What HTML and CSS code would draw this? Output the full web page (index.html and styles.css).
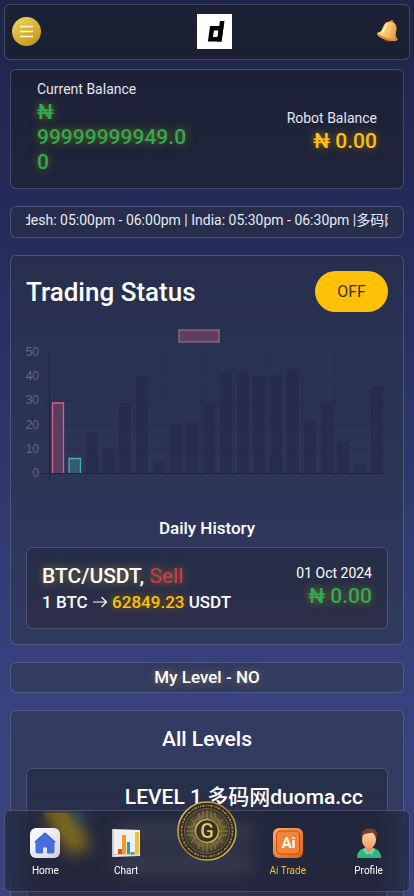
FILE: index.html
```html
<!DOCTYPE html>
<html lang="en">
<head>
<meta charset="utf-8">
<meta name="viewport" content="width=device-width, initial-scale=1">
<title>Trading Dashboard</title>
<link rel="stylesheet" href="styles.css">
</head>
<body>
<header class="topbar glass">
  <button class="menu-btn" type="button" aria-label="Menu">
    <svg viewBox="0 0 29 29"><path d="M8 9.500h13M8 14.500h13M8 19.500h13" stroke="#fff9d8" stroke-width="1.500"/></svg>
  </button>
  <a class="logo" href="#" aria-label="Home page">
    <svg viewBox="0 0 35 35"><g transform="translate(3 0) skewX(-8)" fill="none" stroke="#000" stroke-width="4.500"><rect x="14" y="14.200" width="9" height="11"/><path d="M23.200 7v20.400"/></g></svg>
  </a>
  <button class="bell-btn" type="button" aria-label="Notifications">
    <svg viewBox="0 0 24 26">
      <defs><linearGradient id="bell" x1="0" y1="0" x2="1" y2="0"><stop offset="0" stop-color="#ffdf8c"/><stop offset=".5" stop-color="#fbc162"/><stop offset="1" stop-color="#d98834"/></linearGradient></defs>
      <g transform="rotate(17 12 13)">
        <circle cx="12" cy="3.400" r="1.800" fill="#b3792d"/>
        <ellipse cx="13" cy="21" rx="4" ry="2.600" fill="#a2391c"/>
        <path d="M12 3.400c-4.600 0-6.600 3.200-6.900 7.400-.3 4.200-1 5.700-3.600 7.300C1 20.600 5 22 12 22s11-1.400 10.500-3.900c-2.600-1.600-3.300-3.100-3.600-7.300C18.600 6.600 16.600 3.400 12 3.400z" fill="url(#bell)"/>
        <path d="M1.500 18.200c3 2.200 18 2.200 21 0 .4 2.500-4 3.900-10.500 3.900S1.100 20.700 1.500 18.200z" fill="#e08b36"/>
        <path d="M8.200 7.500c-1.300 2.500-.7 6-2 8.500" stroke="#fff0b5" stroke-width="1.600" fill="none" stroke-linecap="round"/>
      </g>
    </svg>
  </button>
</header>

<main class="page">
  <section class="card balances">
    <div class="balance current">
      <span class="label">Current Balance</span>
      <strong class="amount green">₦ 99999999949.00</strong>
    </div>
    <div class="balance right">
      <span class="label">Robot Balance</span>
      <strong class="amount gold">₦ 0.00</strong>
    </div>
  </section>

  <section class="card ticker">
    <div class="ticker-view"><span class="ticker-text">Bangladesh: 05:00pm - 06:00pm | India: 05:30pm - 06:30pm |多码网</span></div>
  </section>

  <section class="card status">
    <div class="status-head">
      <h1>Trading Status</h1>
      <button class="toggle" type="button">OFF</button>
    </div>
    <svg class="chart" viewBox="0 0 362 188" role="img" aria-label="Trading activity">
      <rect x="153" y="8" width="40" height="12" fill="#ff6384" fill-opacity=".25" stroke="#d0a0c0" stroke-opacity=".35" stroke-width="2"/>
      <g stroke="#1a2038" stroke-opacity=".22">
        <path d="M18 54.500H358M18 78.500H358M18 102.500H358M18 126.500H358"/>
        <path d="M91.500 30V151M141.500 30V151M174.500 30V151M208.500 30V151M241.500 30V151M275.500 30V151M308.500 30V151" stroke-opacity=".12"/>
      </g>
      <path d="M23.500 30V160M16 151.500H358" stroke="#1b2139" stroke-opacity=".8"/>
      <g class="axis" text-anchor="end">
        <text x="13" y="34">50</text><text x="13" y="58">40</text><text x="13" y="82">30</text>
        <text x="13" y="107">20</text><text x="13" y="131">10</text><text x="13" y="155">0</text>
      </g>
      <path d="M26.500 151V81H37.500V151" fill="#ff6384" fill-opacity=".22" stroke="#d95f88" stroke-width="1.300"/>
      <path d="M43 151V136.500H54.500V151" fill="#4bc0c0" fill-opacity=".28" stroke="#4da9b4" stroke-width="1.300"/>
      <g fill="#1e2442" fill-opacity=".42">
        <rect x="60" y="110" width="12" height="41"/><rect x="77" y="127" width="12" height="24"/>
        <rect x="93" y="81" width="12" height="70"/><rect x="110" y="54" width="12" height="97"/>
        <rect x="127" y="139" width="12" height="12"/><rect x="144" y="102" width="12" height="49"/>
        <rect x="160" y="100" width="12" height="51"/><rect x="177" y="81" width="12" height="70"/>
        <rect x="194" y="51" width="12" height="100"/><rect x="211" y="51" width="12" height="100"/>
        <rect x="227" y="54" width="12" height="97"/><rect x="244" y="53" width="12" height="98"/>
        <rect x="261" y="47" width="12" height="104"/><rect x="278" y="98" width="12" height="53"/>
        <rect x="295" y="81" width="12" height="70"/><rect x="311" y="119" width="12" height="32"/>
        <rect x="328" y="143" width="12" height="8"/><rect x="345" y="64" width="12" height="87"/>
      </g>
    </svg>
    <h2>Daily History</h2>
    <article class="inner trade">
      <div>
        <p class="pair">BTC/USDT, <span class="sell">Sell</span></p>
        <p class="rate">1 BTC
          <svg class="arrow" viewBox="0 0 16 16"><path d="M1.500 8h13M10 3.500 14.500 8 10 12.500" fill="none" stroke="currentColor" stroke-width="1.200" stroke-linecap="round" stroke-linejoin="round"/></svg>
          <span class="gold">62849.23</span> USDT</p>
      </div>
      <div class="right">
        <time datetime="2024-10-01">01 Oct 2024</time>
        <strong class="amount green">₦ 0.00</strong>
      </div>
    </article>
  </section>

  <section class="card my-level">My Level - NO</section>

  <section class="card levels">
    <h2 class="levels-title">All Levels</h2>
    <article class="inner level">
      <h3>LEVEL 1 多码网duoma.cc</h3>
      <div class="level-body">
        <svg class="gem" viewBox="0 0 50 44"><path d="M0 0h26l24 34-20 10z" fill="#ffc400"/><path d="M26 0h16l6 22z" fill="#2c7896"/></svg>
        <div class="level-lines"><i></i><i></i></div>
      </div>
    </article>
  </section>
</main>

<nav class="tabbar glass">
  <a class="tab" href="#">
    <svg viewBox="0 0 32 32"><defs><linearGradient id="tile" x2="1" y2="1"><stop stop-color="#fff"/><stop offset="1" stop-color="#d4d2d7"/></linearGradient></defs><rect x="1" y="1" width="30" height="30" rx="6" fill="url(#tile)"/><path d="M16 6.500 7 14.500V25q0 1 1 1h5.500v-6h5v6H24q1 0 1-1V14.500z" fill="#466fdc" stroke="#466fdc" stroke-linejoin="round"/><path d="M6 15.500 16 6.500l10 9" fill="none" stroke="#3f68d2" stroke-width="2" stroke-linejoin="round"/></svg>
    <span>Home</span>
  </a>
  <a class="tab" href="#">
    <svg viewBox="0 0 32 32"><path d="M2 2l28 1v26L2 30z" fill="#f0f0ee"/><path d="M2 2l2 0v28H2z" fill="#c9cacc"/><path d="M8 22h4v5H8z" fill="#e44b2d"/><path d="M12 8h4v19h-4z" fill="#f29a22"/><path d="M17 15h3v12h-3z" fill="#2796c4"/><path d="M20.500 25h4v3h-4z" fill="#45a94b"/><path d="M25 5h4v22h-4z" fill="#f3bd3c"/><path d="M4 27.500l25 .5" stroke="#d4b7a8"/></svg>
    <span>Chart</span>
  </a>
  <a class="tab coin-tab" href="#" aria-label="Coin">
    <svg class="coin" viewBox="0 0 60 60">
      <defs>
        <linearGradient id="gold" x2="1" y2="1"><stop stop-color="#f0cf6f"/><stop offset=".5" stop-color="#a17b30"/><stop offset="1" stop-color="#efc75b"/></linearGradient>
        <radialGradient id="coinface"><stop stop-color="#3c3520"/><stop offset=".65" stop-color="#6c5d3a"/><stop offset="1" stop-color="#35342b"/></radialGradient>
      </defs>
      <circle cx="30" cy="30" r="29" fill="#2b2a24" stroke="url(#gold)" stroke-width="1.600"/>
      <circle cx="30" cy="30" r="25.500" fill="none" stroke="#a1884e" stroke-width="1.800" stroke-dasharray="1.500 1 2.500 1.200 .8 1"/>
      <circle cx="30" cy="30" r="22.500" fill="url(#coinface)" stroke="#a3884a" stroke-width=".6"/>
      <g stroke="#a08a55" stroke-width=".8" fill="none">
        <path d="M30 9v9M26 10v5l-4 4M34 10v5l4 4M22 12v4l-4 4M38 12v4l4 4M30 51v-9M26 50v-5l-4-4M34 50v-5l4-4M22 48v-4l-4-4M38 48v-4l4-4M9 30h9M10 26h5l3-3M10 34h5l3 3M51 30h-9M50 26h-5l-3-3M50 34h-5l-3 3M14 18l5 6M46 18l-5 6M14 42l5-6M46 42l-5-6"/>
      </g>
      <circle cx="30" cy="30" r="11.500" fill="#353226" stroke="url(#gold)" stroke-width="1.500"/>
      <text class="coin-letter" x="30" y="37" text-anchor="middle">G</text>
    </svg>
  </a>
  <a class="tab active" href="#">
    <svg viewBox="0 0 32 32"><defs><linearGradient id="ai" x2="1" y2="1"><stop stop-color="#ffad61"/><stop offset="1" stop-color="#e25c15"/></linearGradient></defs><rect x="1" y="1" width="30" height="30" rx="6" fill="url(#ai)"/><rect x="4.500" y="4" width="23" height="23" rx="4" fill="#f2843b" stroke="#c5501a"/><text class="ai-letter" x="16.500" y="21" text-anchor="middle">Ai</text></svg>
    <span>Ai Trade</span>
  </a>
  <a class="tab" href="#">
    <svg viewBox="0 0 32 32"><defs><linearGradient id="skin" x2="0" y2="1"><stop stop-color="#ffd5a7"/><stop offset="1" stop-color="#ed9c66"/></linearGradient></defs><path d="M4 31c0-6 3-9 8-10h8c5 1 8 4 8 10z" fill="#32b57e"/><path d="M12 18h8v5l-4 4-4-4z" fill="#e79462"/><path d="M11 21l5 5 5-5 1 2-4 5-2-2-2 2-4-5z" fill="#6bdfae"/><path d="M8.500 11C7.500 4 11 1.500 17 1.500c6 0 8 4 6.500 10z" fill="#73402a"/><ellipse cx="16" cy="13" rx="7" ry="8.500" fill="url(#skin)"/><path d="M9 10c0-5 3-6.500 7-6s7 1 7 6c-1-3-2-4-4-4.500-4 1.500-8 0-10 4.500z" fill="#73402a"/></svg>
    <span>Profile</span>
  </a>
</nav>
</body>
</html>
```

FILE: styles.css
```css
* { box-sizing: border-box; }
html, body { height: 100%; }
body {
  margin: 0;
  overflow: hidden;
  background: linear-gradient(180deg, #20244a 0%, #252c5b 25%, #2d3669 48%, #37417e 76%, #3a437a 100%);
  color: #fff;
  font: 14px/20px Roboto, "Noto Sans CJK SC", sans-serif;
}
h1, h2, h3, p { margin: 0; font-weight: 500; }
button { border: 0; padding: 0; font: inherit; cursor: pointer; }
a { color: inherit; text-decoration: none; }
svg { display: block; }

.glass {
  position: fixed;
  left: 4px;
  right: 4px;
  z-index: 2;
  border: 1px solid rgba(150, 160, 200, .32);
  border-radius: 6px;
}
.topbar {
  top: 4px;
  height: 56px;
  padding: 0 8px 2px 7px;
  display: flex;
  justify-content: space-between;
  align-items: center;
  background: linear-gradient(180deg, #1d2136, #1b1f31);
}
.menu-btn {
  width: 29px;
  height: 29px;
  margin-right: 10px;
  border-radius: 50%;
  background: linear-gradient(145deg, #f2da60, #d3ac2b 60%, #b98d1c);
}
.logo { width: 35px; height: 35px; background: #fff; }
.bell-btn { width: 24px; height: 26px; background: none; }

.page {
  height: 100%;
  padding: 69px 10px 96px;
  overflow-y: auto;
  scrollbar-width: none;
}
.card, .inner {
  border: 1px solid rgba(150, 160, 200, .32);
  border-radius: 6px;
}
.card {
  margin-bottom: 17px;
  background: rgba(42, 50, 54, .4);
}
.inner { background: linear-gradient(180deg, rgba(28, 37, 54, .5), rgba(44, 39, 56, .55)); }
.right { text-align: right; }
.green { color: #34a853; text-shadow: 0 0 8px rgba(110, 130, 20, .9); }
.gold { color: #ffc107; text-shadow: 0 0 8px rgba(170, 125, 10, .8); }

.balances {
  padding: 8px 26px 6px;
  display: flex;
  justify-content: space-between;
  align-items: center;
  background: linear-gradient(180deg, #1d2138, #1f253a);
}
.balance { width: 45%; }
.current { padding-bottom: 7px; }
.label { display: block; line-height: 22px; color: #e4e4f2; }
.amount {
  display: block;
  font-size: 21px;
  line-height: 25px;
  font-weight: 500;
  overflow-wrap: anywhere;
}

.ticker { padding: 3px 15px 7px; }
.ticker-view { overflow: hidden; white-space: nowrap; color: #e8e9f4; }
.ticker-text { display: inline-block; transform: translateX(-46px); }

.status { padding: 15px; }
.status-head { display: flex; justify-content: space-between; align-items: center; }
h1 { font-size: 26px; line-height: 32px; }
.toggle {
  width: 73px;
  height: 41px;
  border-radius: 21px;
  background: #ffc107;
  color: #3a3220;
  font-size: 16px;
}
.chart { width: 100%; margin-top: 10px; }
.axis { font: 12px "Liberation Sans", sans-serif; fill: #646a7a; }
h2 { font-size: 17px; line-height: 20px; text-align: center; margin: 8px 0 9px; }
.trade { padding: 14px 15px; display: flex; justify-content: space-between; }
.pair {
  font-size: 21px;
  line-height: 28px;
  text-shadow: 0 0 8px rgba(190, 160, 60, .7);
}
.sell { color: #dc3545; font-weight: 400; }
.rate { font-size: 17px; line-height: 24px; }
.arrow { display: inline-block; width: 16px; height: 16px; vertical-align: -2px; }
.trade time { display: block; line-height: 22px; }

.my-level {
  padding: 4px;
  text-align: center;
  font-size: 17px;
  line-height: 21px;
  font-weight: 500;
  text-shadow: 0 0 8px rgba(190, 160, 60, .6);
}

.levels { padding: 15px; }
.levels-title { font-size: 21px; line-height: 26px; margin: 0 0 16px; }
.level { min-height: 125px; padding: 14px 24px 14px 16px; }
.level h3 { font-size: 21px; line-height: 28px; text-align: right; }
.level-body { display: flex; gap: 26px; }
.gem { width: 48px; height: 46px; }
.level-lines { flex: 1; padding-top: 12px; }
.level-lines i { display: block; width: 55%; height: 20px; margin-bottom: 10px; background: rgba(180, 185, 205, .3); }

.tabbar {
  bottom: 4px;
  height: 82px;
  display: grid;
  grid-template-columns: repeat(5, 1fr);
  background: rgba(26, 30, 48, .5);
  backdrop-filter: blur(8px);
}
.tab {
  padding-top: 16px;
  display: flex;
  flex-direction: column;
  align-items: center;
  gap: 4px;
  font-size: 10px;
  line-height: 16px;
}
.tab svg { width: 32px; height: 32px; }
.active { color: #f5c127; }
.coin-tab { padding-top: 0; }
.coin-tab .coin { width: 60px; height: 60px; margin-top: -10px; }
.coin-letter { font: 500 20px Roboto, sans-serif; fill: #e7c466; }
.ai-letter { font: 700 15px Roboto, sans-serif; fill: #fff; }
```
